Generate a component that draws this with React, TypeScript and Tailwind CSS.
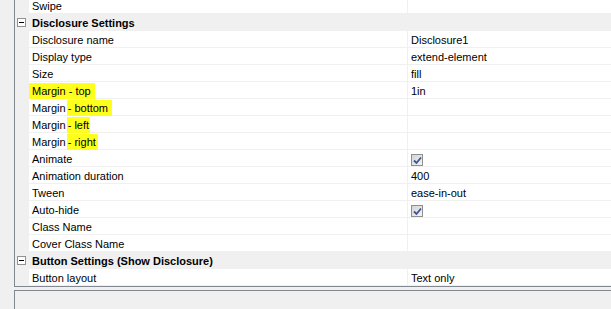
import React from "react";

type Row =
  | { kind: "cat"; label: string }
  | { kind: "prop"; name: React.ReactNode; value?: React.ReactNode };

function Hl({ children, className = "" }: { children: React.ReactNode; className?: string }) {
  return <span className={`inline-block bg-[#ffff1e] h-[16px] leading-[16px] ${className}`}>{children}</span>;
}

function Check() {
  return (
    <div className="mt-[3px] w-[12px] h-[12px] border border-[#8e8f8f] bg-gradient-to-br from-[#d4d4d4] to-[#f4f4f4] flex items-center justify-center">
      <svg width="9" height="9" viewBox="0 0 9 9">
        <path d="M1 4.5 L3.5 7 L8 1.5" fill="none" stroke="#3d5494" strokeWidth="1.8" />
      </svg>
    </div>
  );
}

const rows: Row[] = [
  { kind: "prop", name: "Swipe" },
  { kind: "cat", label: "Disclosure Settings" },
  { kind: "prop", name: "Disclosure name", value: "Disclosure1" },
  { kind: "prop", name: "Display type", value: "extend-element" },
  { kind: "prop", name: "Size", value: "fill" },
  { kind: "prop", name: <Hl className="-ml-[3px] pl-[3px] pr-[4px]">Margin - top</Hl>, value: "1in" },
  { kind: "prop", name: <>Margin <Hl className="-ml-[2px] pl-[1px] pr-[4px]">- bottom</Hl></>, value: "" },
  { kind: "prop", name: <>Margin <Hl className="-ml-[2px] pl-[1px] pr-[1px]">- left</Hl></>, value: "" },
  { kind: "prop", name: <>Margin <Hl className="-ml-[2px] pl-[1px] pr-[2px]">- right</Hl></>, value: "" },
  { kind: "prop", name: "Animate", value: <Check /> },
  { kind: "prop", name: "Animation duration", value: "400" },
  { kind: "prop", name: "Tween", value: "ease-in-out" },
  { kind: "prop", name: "Auto-hide", value: <Check /> },
  { kind: "prop", name: "Class Name", value: "" },
  { kind: "prop", name: "Cover Class Name", value: "" },
  { kind: "cat", label: "Button Settings (Show Disclosure)" },
  { kind: "prop", name: "Button layout", value: "Text only" },
];

export default function App() {
  return (
    <div
      className="w-[611px] h-[309px] overflow-hidden bg-[#f0f0f0] pl-[14px] text-[11px] text-black"
      style={{ fontFamily: '"Liberation Sans", Arial, sans-serif' }}
    >
      <div className="w-[620px] border-l border-b border-[#828790] bg-white -mt-[3px]">
        {rows.map((r, i) =>
          r.kind === "cat" ? (
            <div key={i} className="h-[17px] flex bg-[#f0f0f0] border-b border-[#f0f0f0]">
              <div className="w-[14px] shrink-0 pl-[2px] pt-[4px]">
                <div className="w-[9px] h-[9px] border border-[#919191] bg-white flex items-center justify-center">
                  <div className="w-[5px] h-[1px] bg-black" />
                </div>
              </div>
              <div className="pl-[3px] pt-[1px] leading-[16px] font-bold">{r.label}</div>
            </div>
          ) : (
            <div key={i} className="h-[17px] flex border-b border-[#f0f0f0]">
              <div className="w-[14px] shrink-0 bg-[#f0f0f0]" />
              <div className="w-[379px] shrink-0 pl-[3px] pt-[1px] leading-[16px] whitespace-nowrap border-r border-[#f0f0f0]">
                {r.name}
              </div>
              <div className="flex-1 pl-[3px] pt-[1px] leading-[16px] whitespace-nowrap">{r.value}</div>
            </div>
          )
        )}
      </div>
      <div className="mt-[3px] w-[620px] h-[40px] border-l border-t border-[#828790] bg-[#f0f0f0]" />
    </div>
  );
}
